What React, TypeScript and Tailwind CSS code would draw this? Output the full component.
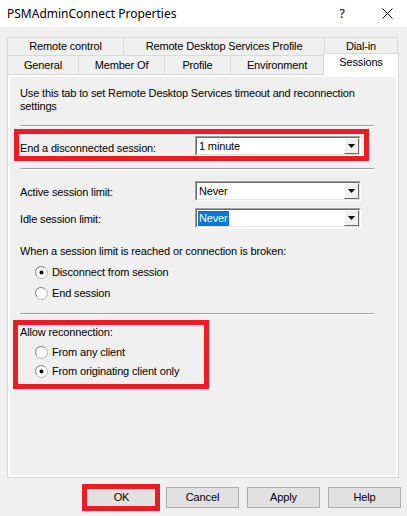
import React from "react";

const Dropdown = ({ value, selected, className = "" }: { value: string; selected?: boolean; className?: string }) => (
  <div className={"w-[166px] h-[20px] border border-t-[#a0a0a0] border-l-[#a0a0a0] border-r-[#ffffff] border-b-[#ffffff] flex " + className}>
    <div className="flex-1 flex border border-t-[#696969] border-l-[#696969] border-r-[#e3e3e3] border-b-[#e3e3e3] bg-white items-center">
      <div className="flex-1 pl-[1px] flex items-center">
        <span className={selected ? "bg-[#0078d7] text-white px-[1px] leading-[15px]" : "px-[1px] leading-[15px]"}>{value}</span>
      </div>
      <div className="w-[15px] h-[16px] bg-[#f0f0f0] border border-t-[#ffffff] border-l-[#ffffff] border-r-[#696969] border-b-[#696969] flex items-center justify-center">
        <svg width="7" height="4" viewBox="0 0 7 4"><path d="M0 0 L7 0 L3.5 4 Z" fill="#000" /></svg>
      </div>
    </div>
  </div>
);

const Radio = ({ checked, label }: { checked?: boolean; label: string }) => (
  <div className="flex items-center">
    <svg width="13" height="13" viewBox="0 0 13 13" className="mr-[4px]">
      <circle cx="6.5" cy="6.5" r="6" fill="#ffffff" stroke="#b5b5b5" strokeWidth="1" />
      <path d="M2 9.5 A5 5 0 0 1 9.5 2" fill="none" stroke="#8c8c8c" strokeWidth="1" />
      {checked && <circle cx="6.5" cy="6.5" r="2" fill="#000" />}
    </svg>
    <span>{label}</span>
  </div>
);

const Sep = () => <div className="h-[2px] border-t border-t-[#a0a0a0] border-b border-b-[#ffffff] w-[354px]" />;

const Btn = ({ label }: { label: string }) => (
  <div className="w-[73px] h-[21px] bg-[#e1e1e1] border border-[#adadad] flex items-center justify-center">{label}</div>
);

export default function App() {
  return (
    <div className="w-[407px] h-[516px] bg-[#f0f0f0] text-black text-[11px] leading-[13px] tracking-[-0.15px] overflow-hidden" style={{ fontFamily: '"Liberation Sans", Arial, sans-serif' }}>
      <div className="h-[27px] bg-white flex items-center pl-[7px] pr-[14px] tracking-normal">
        <span className="text-[12px] flex-1" style={{ fontFamily: '"Noto Sans", "Open Sans", sans-serif' }}>PSMAdminConnect Properties</span>
        <span className="text-[13px] mr-[37px]" style={{ fontFamily: '"Noto Sans", sans-serif' }}>?</span>
        <svg width="11" height="11" viewBox="0 0 11 11"><path d="M0.5 0.5 L10.5 10.5 M10.5 0.5 L0.5 10.5" stroke="#000" strokeWidth="1" /></svg>
      </div>
      <div className="pl-[7px] pt-[10px]">
        <div className="flex h-[18px]">
          <div className="w-[116px] border-t border-l border-[#d9d9d9] flex items-center justify-center">Remote control</div>
          <div className="w-[201px] border-t border-l border-[#d9d9d9] flex items-center justify-center">Remote Desktop Services Profile</div>
          <div className="w-[74px] border-t border-l border-r border-[#d9d9d9] flex items-center justify-center">Dial-in</div>
        </div>
        <div className="flex h-[19px] items-end">
          <div className="w-[71px] h-[19px] border-t border-l border-[#d9d9d9] flex items-center justify-center">General</div>
          <div className="w-[86px] h-[19px] border-t border-l border-[#d9d9d9] flex items-center justify-center">Member Of</div>
          <div className="w-[66px] h-[19px] border-t border-l border-[#d9d9d9] flex items-center justify-center">Profile</div>
          <div className="w-[93px] h-[19px] border-t border-l border-[#d9d9d9] flex items-center justify-center">Environment</div>
          <div className="w-[76px] h-[22px] -mb-[1px] border-t border-l border-r border-[#d9d9d9] bg-white flex items-start pt-[2px] justify-center relative z-10">Sessions</div>
        </div>
        <div className="w-[392px] h-[404px] border border-[#d9d9d9] bg-white p-[2px]">
          <div className="w-full h-full bg-[#f0f0f0] pl-[10px] pt-[10px] flex flex-col">
            <div className="w-[360px]">Use this tab to set Remote Desktop Services timeout and reconnection settings</div>
            <div className="mt-[12px]"><Sep /></div>
            <div className="mt-[2px] -ml-[6px] w-[355px] h-[32px] border-[5px] border-[#ed1c24] flex items-start pl-[1px] pr-[3px] relative">
              <span className="flex-1 mt-[8px]">End a disconnected session:</span>
              <Dropdown value="1 minute" className="mt-[2px] relative" />
            </div>
            <div className="mt-[7px]"><Sep /></div>
            <div className="mt-[11px] flex items-center w-[341px]">
              <span className="flex-1 mt-[2px]">Active session limit:</span>
              <Dropdown value="Never" />
            </div>
            <div className="mt-[7px] flex items-center w-[341px]">
              <span className="flex-1 mt-[2px]">Idle session limit:</span>
              <Dropdown value="Never" selected />
            </div>
            <div className="mt-[17px]">When a session limit is reached or connection is broken:</div>
            <div className="mt-[4px] ml-[15px] h-[21px] flex items-center"><Radio checked label="Disconnect from session" /></div>
            <div className="ml-[15px] h-[21px] flex items-center"><Radio label="End session" /></div>
            <div className="mt-[9px]"><Sep /></div>
            <div className="mt-[5px] -ml-[7px] w-[196px] h-[69px] border-[5px] border-[#ed1c24] pl-[2px] flex flex-col">
              <div className="h-[13px] mt-[1px]">Allow reconnection:</div>
              <div className="ml-[15px] h-[19px] mt-[4px] flex items-center"><Radio label="From any client" /></div>
              <div className="ml-[15px] h-[19px] flex items-center"><Radio checked label="From originating client only" /></div>
            </div>
          </div>
        </div>
      </div>
      <div className="flex justify-end gap-[8px] pr-[6px] mt-[9px]">
        <div className="relative">
          <Btn label="OK" />
          <div className="absolute -left-[3px] -right-[2px] -top-[3px] -bottom-[3px] border-[5px] border-[#ed1c24]" />
        </div>
        <Btn label="Cancel" />
        <Btn label="Apply" />
        <Btn label="Help" />
      </div>
    </div>
  );
}
